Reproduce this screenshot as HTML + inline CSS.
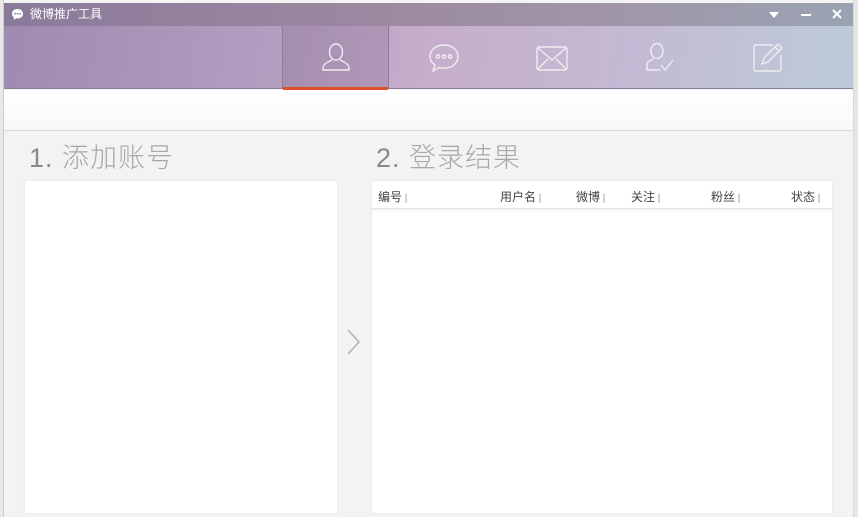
<!DOCTYPE html>
<html><head><meta charset="utf-8"><style>
*{margin:0;padding:0;box-sizing:border-box}
body{width:858px;height:517px;overflow:hidden;background:#f4f4f4;font-family:"Liberation Sans","Noto Sans CJK SC",sans-serif;position:relative}
.lstrip{position:absolute;left:0;top:0;width:4px;height:517px;background:#e8e8e8;border-right:1px solid #ccc}
.rstrip{position:absolute;left:853px;top:0;width:5px;height:517px;background:#e6e6e6;border-left:1px solid #d8d8d8}
.win{position:absolute;left:4px;top:3px;width:849px;height:514px;background:#f3f3f3}
.title{position:absolute;left:0;top:0;width:849px;height:23px;background:linear-gradient(90deg,#8a7a9a,#9b879f 40%,#a095a8 70%,#9aa3b3);color:#fff;font-size:12px;line-height:23px}
.tabs{position:absolute;left:0;top:23px;width:849px;height:63px;background:linear-gradient(100deg,#9f8bb0 0%,#b29cbf 30%,#c6aecb 50%,#c3bad4 75%,#bccbdb 100%);border-bottom:1px solid #8e7f98}
.tab{position:absolute;top:0;width:107px;height:63px;display:flex;align-items:center;justify-content:center}
.act{left:278px;background:rgba(120,95,130,0.25);border-left:1px solid #8e7b98;border-right:1px solid #8e7b98}
.act:after{content:"";position:absolute;left:0;right:0;bottom:-1px;height:3px;background:#e0502c}
.tool{position:absolute;left:0;top:87px;width:849px;height:41px;background:linear-gradient(#fff,#f8f8f8);border-bottom:1px solid #d8d8d8}
h2{position:absolute;font-weight:300;font-size:27px;color:#a8a8a8;top:133px;letter-spacing:1px}
h2 b{font-weight:normal;color:#888}
.panel{position:absolute;background:#fff;box-shadow:0 0 2px #ddd}
.hd{position:absolute;top:0;left:0;right:0;height:28px;border-bottom:1px solid #e4e4e4;box-shadow:0 1px 2px #eee;font-size:12px;color:#444}
.hd span{position:absolute;top:7px}
.hd span:after{content:" |";color:#999;font-size:10px}
</style></head><body>
<div class="lstrip"></div><div class="rstrip"></div>
<div class="win">
<div class="title"><svg style="position:absolute;left:7px;top:5px" width="13" height="13" viewBox="0 0 13 13"><path d="M6.5 1C3.2 1 1 3 1 5.7c0 1.6.8 2.8 2 3.6L2.6 12 5.3 10.3c.4.1.8.1 1.2.1 3.3 0 5.5-2 5.5-4.7S9.8 1 6.5 1z" fill="#fff"/><circle cx="4" cy="5.8" r=".9" fill="#8a7a9a"/><circle cx="6.5" cy="5.8" r=".9" fill="#8a7a9a"/><circle cx="9" cy="5.8" r=".9" fill="#8a7a9a"/></svg><span style="position:absolute;left:26px">微博推广工具</span>
<svg style="position:absolute;left:765px;top:9px" width="10" height="6"><path d="M0 0h10L5 6z" fill="#fff"/></svg>
<div style="position:absolute;left:797px;top:11px;width:10px;height:2px;background:#fff"></div>
<svg style="position:absolute;left:828px;top:6px" width="10" height="10"><path d="M1 1l8 8M9 1l-8 8" stroke="#fff" stroke-width="2"/></svg>
</div>
<div class="tabs">
<div class="tab act"><svg width="34" height="34" viewBox="0 0 34 34" fill="none" stroke="#eee" stroke-width="1.4"><ellipse cx="17" cy="11" rx="6.5" ry="8"/><path d="M13 19c-4 2-9 4-9 8v2h26v-2c0-4-5-6-9-8"/></svg></div>
<div class="tab" style="left:386px"><svg width="34" height="34" viewBox="0 0 34 34" fill="none" stroke="#eee" stroke-width="1.4"><path d="M17 4C9 4 3 9 3 15.5c0 3.5 2 6.5 5 8.5l-2 6 6-3.5c1.6.5 3.3.7 5 .7 8 0 14-5 14-11.7S25 4 17 4z"/><circle cx="11" cy="15.5" r="1.7"/><circle cx="17" cy="15.5" r="1.7"/><circle cx="23" cy="15.5" r="1.7"/></svg></div>
<div class="tab" style="left:494px"><svg width="34" height="30" viewBox="0 0 34 30" fill="none" stroke="#eee" stroke-width="1.4"><rect x="2" y="4" width="30" height="23" rx="2"/><path d="M3 5l14 12L31 5M3 26l10-10M31 26L21 16"/></svg></div>
<div class="tab" style="left:602px"><svg width="34" height="34" viewBox="0 0 34 34" fill="none" stroke="#eee" stroke-width="1.4"><ellipse cx="14" cy="10" rx="6" ry="7.5"/><path d="M10 18c-3 1.5-6 3-6 6v5h13M18 18"/><path d="M18 24l4 5 8-10"/></svg></div>
<div class="tab" style="left:710px"><svg width="34" height="34" viewBox="0 0 34 34" fill="none" stroke="#eee" stroke-width="1.4"><path d="M22 4H5a2 2 0 0 0-2 2v22a2 2 0 0 0 2 2h23a2 2 0 0 0 2-2V14"/><path d="M27 3l4 4-14 14-6 2 2-6z M24 6l4 4"/></svg></div>
</div>
<div class="tool"></div>
<h2 style="left:25px"><b>1.</b> 添加账号</h2>
<h2 style="left:372px"><b>2.</b> 登录结果</h2>
<div class="panel" style="left:21px;top:178px;width:312px;height:332px"></div>
<svg style="position:absolute;left:343px;top:326px" width="14" height="26"><path d="M1 1l11 12L1 25" fill="none" stroke="#aaa" stroke-width="1.3"/></svg>
<div class="panel" style="left:368px;top:178px;width:460px;height:332px">
<div class="hd"><span style="left:6px">编号</span><span style="left:128px">用户名</span><span style="left:204px">微博</span><span style="left:259px">关注</span><span style="left:339px">粉丝</span><span style="left:419px">状态</span></div>
</div>
</div>
</body></html>
